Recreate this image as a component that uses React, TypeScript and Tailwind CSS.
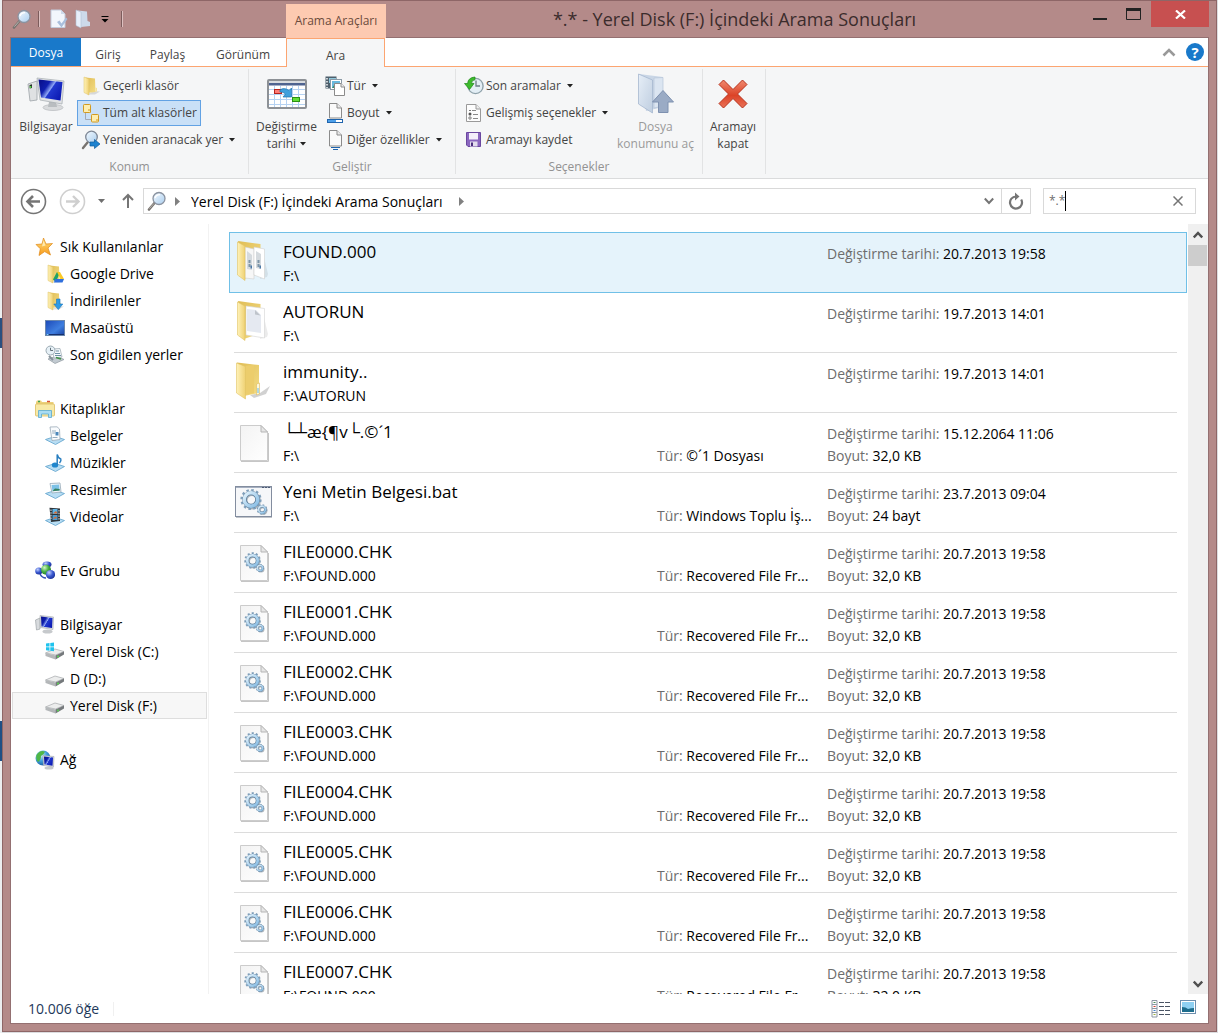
import { useState, type ReactNode } from "react";

type Icon = () => ReactNode;

const Gradients = () => (
  <svg width="0" height="0" className="absolute" aria-hidden="true">
    <defs>
      <linearGradient id="folderFront" x1="0" y1="0" x2="1" y2="0">
        <stop offset="0" stopColor="#fff2b8" />
        <stop offset="1" stopColor="#efd173" />
      </linearGradient>
      <linearGradient id="folderBack" x1="0" y1="0" x2="1" y2="1">
        <stop offset="0" stopColor="#e0bd55" />
        <stop offset="1" stopColor="#f3dc85" />
      </linearGradient>
      <linearGradient id="screen" x1="0" y1="0.2" x2="1" y2="0.8">
        <stop offset="0" stopColor="#0a128f" />
        <stop offset="0.3" stopColor="#0f1fae" />
        <stop offset="0.48" stopColor="#8ea6f6" />
        <stop offset="0.52" stopColor="#2138cf" />
        <stop offset="1" stopColor="#0a17b0" />
      </linearGradient>
      <linearGradient id="desk" x1="0" y1="0" x2="1" y2="1">
        <stop offset="0" stopColor="#1c49b8" />
        <stop offset="0.6" stopColor="#3f7fe0" />
        <stop offset="1" stopColor="#173f9e" />
      </linearGradient>
      <linearGradient id="gearFill" x1="0" y1="0" x2="1" y2="1">
        <stop offset="0" stopColor="#e2f2fc" />
        <stop offset="1" stopColor="#86bce4" />
      </linearGradient>
      <linearGradient id="glass" x1="0" y1="0" x2="1" y2="1">
        <stop offset="0" stopColor="#f4faff" />
        <stop offset="1" stopColor="#a9cdee" />
      </linearGradient>
      <linearGradient id="paper" x1="0" y1="0" x2="1" y2="1">
        <stop offset="0" stopColor="#f3f3f3" />
        <stop offset="1" stopColor="#ffffff" />
      </linearGradient>
      <linearGradient id="ghost" x1="0" y1="0" x2="1" y2="1">
        <stop offset="0" stopColor="#e6eef7" />
        <stop offset="1" stopColor="#bfcee0" />
      </linearGradient>
      <linearGradient id="redX" x1="0" y1="0" x2="0" y2="1">
        <stop offset="0" stopColor="#f08a70" />
        <stop offset="0.55" stopColor="#dc4327" />
        <stop offset="1" stopColor="#ea7359" />
      </linearGradient>
      <linearGradient id="star" x1="0" y1="0" x2="0" y2="1">
        <stop offset="0" stopColor="#ffdf7a" />
        <stop offset="1" stopColor="#f79a1c" />
      </linearGradient>
      <radialGradient id="blueBall" cx="0.35" cy="0.3" r="0.8">
        <stop offset="0" stopColor="#c3d2ff" />
        <stop offset="0.5" stopColor="#3a59d0" />
        <stop offset="1" stopColor="#152a8e" />
      </radialGradient>
      <radialGradient id="greenBall" cx="0.35" cy="0.3" r="0.8">
        <stop offset="0" stopColor="#d4f7c6" />
        <stop offset="0.5" stopColor="#47b043" />
        <stop offset="1" stopColor="#1c7423" />
      </radialGradient>
      <radialGradient id="globe" cx="0.35" cy="0.3" r="0.8">
        <stop offset="0" stopColor="#d9f2ff" />
        <stop offset="0.5" stopColor="#3f9fdc" />
        <stop offset="1" stopColor="#15539b" />
      </radialGradient>
    </defs>
  </svg>
);

/* ---------- 20px icons ---------- */

const Magnifier = () => (
  <svg width="20" height="20" viewBox="0 0 20 20">
    <path d="M2 18.500 L7.500 12" stroke="#77736f" strokeWidth="2.600" strokeLinecap="round" />
    <path d="M2.400 17.600 L7 12.400" stroke="#c9c5c2" strokeWidth="0.800" />
    <circle cx="12" cy="7.500" r="6" fill="url(#glass)" stroke="#8b93a0" strokeWidth="1.300" />
    <path d="M8 7 Q9 3.800 13 3.600" stroke="#fff" strokeWidth="1.400" fill="none" />
  </svg>
);

const FolderShape = () => (
  <>
    <path d="M13 15 L19 15.500 L14 18.500 L6 18.500z" fill="#000" opacity="0.12" />
    <path d="M4.500 1.500 L14 2.500 L14.500 16 L6 17z" fill="url(#folderBack)" />
    <path d="M3 1 L8 3 V19 L3 16.500z" fill="url(#folderFront)" stroke="#dfc063" strokeWidth="0.500" />
    <path d="M14.500 11.500 L16 12 V15.500 L14.500 16z" fill="#f5e29a" />
  </>
);

const SmallFolder = () => (
  <svg width="20" height="20" viewBox="0 0 20 20"><FolderShape /></svg>
);

const DriveFolder = () => (
  <svg width="20" height="20" viewBox="0 0 20 20">
    <FolderShape />
    <path d="M12 8 L15 8 L11 18 L8 15.500z" fill="#21a366" />
    <path d="M12 8 L15 8 L19 15 L15.500 15z" fill="#fbc926" />
    <path d="M10 15 L19 15 L17.500 18.500 L9 18.500z" fill="#2f6fdd" />
  </svg>
);

const DownloadFolder = () => (
  <svg width="20" height="20" viewBox="0 0 20 20">
    <FolderShape />
    <path d="M11.500 8 H15 V13 H17.800 L13.300 18.600 L8.800 13 H11.500z" fill="#2e9be6" stroke="#1673bd" strokeWidth="0.600" />
  </svg>
);

const TreeFolders = () => (
  <svg width="20" height="20" viewBox="0 0 20 20">
    <path d="M4.500 9 V16.500 H11" fill="none" stroke="#a3a9b3" />
    <rect x="2.500" y="1.500" width="7" height="8" rx="0.800" fill="#fdeeb0" stroke="#d29a20" />
    <path d="M7 7 h2.500 v2.500" fill="none" stroke="#d29a20" />
    <rect x="10.500" y="11.500" width="7" height="7.500" rx="0.800" fill="#fdeeb0" stroke="#d29a20" />
    <path d="M15 17 h2.500" stroke="#d29a20" />
  </svg>
);

const SearchAgain = () => (
  <svg width="20" height="20" viewBox="0 0 20 20">
    <path d="M2 18 L6.500 12.500" stroke="#77736f" strokeWidth="2.400" strokeLinecap="round" />
    <circle cx="10.500" cy="7" r="5.800" fill="url(#glass)" stroke="#7d8796" strokeWidth="1.300" />
    <path d="M9 12 H13.500 V9.500 L19 14 L13.500 18.500 V16 H9z" fill="#1d82cf" stroke="#0f5c9c" strokeWidth="0.700" />
  </svg>
);

const Kinds = () => (
  <svg width="20" height="20" viewBox="0 0 20 20">
    <rect x="0.500" y="0.500" width="11" height="12" fill="#4d5f6c" />
    <path d="M2 2v10" stroke="#fff" strokeWidth="1.400" strokeDasharray="1.500 1.500" />
    <rect x="4" y="2" width="7" height="5" fill="#8ec7dc" />
    <rect x="5.500" y="3.500" width="11" height="10" fill="#fff" stroke="#8a9aa6" />
    <rect x="7" y="5" width="8" height="7" fill="#69b9de" />
    <path d="M7 12 l3-4 2 2 3-2 v4z" fill="#3c8c6b" />
    <path d="M9.500 7.500 H16 L19.500 11 V19.500 H9.500z" fill="#fff" stroke="#8b8b8b" />
    <path d="M16 7.500 V11 H19.500" fill="#eee" stroke="#8b8b8b" />
  </svg>
);

const SizeDoc = () => (
  <svg width="20" height="20" viewBox="0 0 20 20">
    <path d="M4.500 0.500 H12 L16.500 5 V15 H4.500z" fill="#fafafa" stroke="#8b8b8b" />
    <path d="M12 0.500 V5 H16.500" fill="#e9e9e9" stroke="#8b8b8b" />
    <rect x="2.500" y="16.500" width="15" height="3" fill="#fff" stroke="#1f64ad" />
    <rect x="3" y="17" width="8" height="2" fill="#4da0ea" />
  </svg>
);

const MoreDoc = () => (
  <svg width="20" height="20" viewBox="0 0 20 20">
    <path d="M4.500 0.500 H12 L16.500 5 V16 H4.500z" fill="#fafafa" stroke="#8b8b8b" />
    <path d="M12 0.500 V5 H16.500" fill="#e9e9e9" stroke="#8b8b8b" />
    <path d="M6 17.500 H15 M8 19.500 H13" stroke="#1f64ad" />
  </svg>
);

const History = () => (
  <svg width="20" height="20" viewBox="0 0 20 20">
    <circle cx="11.500" cy="10" r="7.600" fill="#e3eef5" stroke="#8fa2ab" strokeWidth="1.400" />
    <path d="M12 4.500 V10 H16" fill="none" stroke="#6c7c86" strokeWidth="1.300" />
    <path d="M11 1 Q4 1.500 3.600 7.500 H0.500 L5.500 13.500 L10 7.500 H7.500 Q7.500 4 11 3.800z" fill="#3dbb2c" stroke="#1d8617" strokeWidth="0.700" />
  </svg>
);

const OptionsDoc = () => (
  <svg width="20" height="20" viewBox="0 0 20 20">
    <path d="M2.500 1.500 H12 L16.500 6 V18.500 H2.500z" fill="#fdfdfd" stroke="#9a9a9a" />
    <path d="M12 1.500 V6 H16.500" fill="#eee" stroke="#9a9a9a" />
    <path d="M8 7.500h4 M9 11.500h5 M9 15.500h5" stroke="#8a8a8a" />
    <circle cx="6" cy="11" r="1.500" fill="#555" />
    <circle cx="6" cy="15" r="1.200" fill="#fff" stroke="#777" />
    <path d="M5 7.500h2" stroke="#777" />
  </svg>
);

const Floppy = () => (
  <svg width="20" height="20" viewBox="0 0 20 20">
    <path d="M2.500 2.500 H16.500 V16.500 H4 L2.500 15z" fill="#8a66bf" stroke="#6a479f" />
    <rect x="5" y="3" width="9" height="6.500" fill="#f4effa" />
    <rect x="6" y="11.500" width="7.500" height="5" fill="#e2dced" />
    <rect x="7" y="12.500" width="2" height="3.500" fill="#4a2d7c" />
  </svg>
);

const Star = () => (
  <svg width="20" height="20" viewBox="0 0 20 20">
    <path d="M8.500 1 L11 7 L17.500 6.500 L13 11 L15.500 18 L9.700 14.600 L4 18.500 L5.300 11.800 L1 7.500 L7 7z" fill="url(#star)" stroke="#e08a1a" strokeWidth="0.700" />
    <path d="M8.500 3.500 L10.500 8.500 L7 9.500z" fill="#fff3c4" opacity="0.8" />
  </svg>
);

const Desktop = () => (
  <svg width="20" height="20" viewBox="0 0 20 20">
    <rect x="0.500" y="2.500" width="19" height="15" fill="url(#desk)" stroke="#6b87ad" />
    <path d="M1 16.500h18" stroke="#16306e" />
    <path d="M1.500 16.500h2" stroke="#7fd0ff" />
  </svg>
);

const Recent = () => (
  <svg width="20" height="20" viewBox="0 0 20 20">
    <path d="M3 14 L12 11 L19 14.500 L10 18.500z" fill="#c2cad1" stroke="#8e989f" strokeWidth="0.700" />
    <path d="M7 4 L15 3.500 L17 12 L9 13z" fill="#f5f9fc" stroke="#a5b0b8" strokeWidth="0.800" />
    <path d="M11 6h3 M10 8.500h5 M10 10.500h6" stroke="#6e90a5" />
    <circle cx="5.500" cy="5.500" r="4.500" fill="#e6f0f6" stroke="#9caab3" />
    <path d="M5.500 2.800 V5.500 H8" fill="none" stroke="#64727b" />
    <path d="M11 12.500 L16 14" stroke="#3d9145" strokeWidth="1.500" />
    <path d="M4 11 L8 15" stroke="#849099" strokeWidth="2" />
  </svg>
);

const Libraries = () => (
  <svg width="20" height="20" viewBox="0 0 20 20">
    <path d="M1 3 L2 1.500 H6 L7 3 H18.500 V17 H1z" fill="#ecd07a" />
    <path d="M3 2.500h2" stroke="#3aa352" strokeWidth="1.500" />
    <path d="M12 2.500h3" stroke="#d95338" strokeWidth="1.500" />
    <rect x="0.500" y="5" width="19" height="12" rx="1" fill="#f8e9a6" stroke="#dcbc60" strokeWidth="0.800" />
    <path d="M3.500 18.500 V11.500 H16.500 V18.500 H13.500 V15 H6.500 V18.500z" fill="#a9dcf2" stroke="#58a9d0" strokeWidth="0.800" />
  </svg>
);

const Tray = () => (
  <path d="M0.500 13.500 L10 10.500 L19.500 13.500 L10.500 18.500z" fill="#b8ddf3" stroke="#6aa9d0" strokeWidth="0.900" />
);

const Documents = () => (
  <svg width="20" height="20" viewBox="0 0 20 20">
    <Tray />
    <path d="M5 1 L12 0.800 L14.500 3 L15 13.500 L7 14.500z" fill="#fafcfe" stroke="#9aaab8" strokeWidth="0.800" />
    <path d="M7 5h4 M7.200 7h3 M7.500 11.500h5" stroke="#8ba4b8" strokeWidth="0.900" />
    <rect x="10.500" y="6" width="3" height="3.500" fill="#4a86ba" />
  </svg>
);

const Music = () => (
  <svg width="20" height="20" viewBox="0 0 20 20">
    <Tray />
    <ellipse cx="10" cy="12" rx="3.200" ry="2.600" fill="#1f86cd" />
    <path d="M12.200 12 V1.500 Q13 5 15.800 6 Q16.500 8 14.500 10" fill="none" stroke="#2a7fc0" strokeWidth="1.500" />
  </svg>
);

const Pictures = () => (
  <svg width="20" height="20" viewBox="0 0 20 20">
    <Tray />
    <path d="M5 3.500 L15 3 L16 12 L7 13z" fill="#f4f8fb" stroke="#97a9b8" strokeWidth="0.800" />
    <path d="M6.500 5 L14 4.600 L14.700 10.600 L7.500 11.200z" fill="#7cc1e6" />
    <path d="M7.300 11.200 L10 8.500 L14.600 9 V10.600z" fill="#35815f" />
  </svg>
);

const Videos = () => (
  <svg width="20" height="20" viewBox="0 0 20 20">
    <Tray />
    <path d="M4.500 0.800 L15 1.500 V14 L6 15z" fill="#2c343a" />
    <path d="M6 2.500 V13.500 M14 3 V13" stroke="#e2e6e8" strokeDasharray="1.500 1.200" />
    <path d="M7.500 2 H12.500 V7 H7.500z" fill="#5db3e4" />
    <path d="M7.500 8 H12.500 V13 H7.500z" fill="#4a9bd0" />
    <path d="M8 6.500 L11 4 L12.500 6.500z M8 12 L10 9.500 L12.500 11z" fill="#de6a30" />
  </svg>
);

const HomeGroup = () => (
  <svg width="20" height="20" viewBox="0 0 20 20">
    <circle cx="3.800" cy="10" r="3.600" fill="url(#blueBall)" />
    <ellipse cx="12" cy="3.500" rx="4.500" ry="3" fill="url(#blueBall)" />
    <circle cx="11" cy="8.700" r="5" fill="url(#greenBall)" />
    <circle cx="15.500" cy="13.500" r="4.600" fill="url(#blueBall)" />
    <path d="M5 13 Q7 17 11 17" stroke="#2f4fb5" strokeWidth="1.500" fill="none" />
  </svg>
);

const SmallComputer = () => (
  <svg width="20" height="20" viewBox="0 0 20 20">
    <path d="M0.500 5 L5 3 V14 L1.500 15z" fill="#d8dbde" stroke="#9da3a8" strokeWidth="0.700" />
    <ellipse cx="12.500" cy="16.500" rx="5" ry="2" fill="#c6c9cc" />
    <path d="M5 0.500 L18.500 2 L18 14.500 L5.500 12.500z" fill="#d9dcdf" stroke="#a4aaaf" strokeWidth="0.600" />
    <path d="M6 1.500 L17.500 3 L17 13 L6.500 11.500z" fill="url(#screen)" />
  </svg>
);

const DriveShape = () => (
  <>
    <path d="M0.500 11 L10 7 L19 9.500 L10.500 13z" fill="#eceded" stroke="#a5a8aa" strokeWidth="0.700" />
    <path d="M0.500 11 L10.500 13.500 V17.500 L0.500 14z" fill="#b4b7b9" />
    <path d="M10.500 13.500 L19 9.500 V12.500 L10.500 17.500z" fill="#75797c" />
    <circle cx="13" cy="14.500" r="0.900" fill="#53e04a" />
  </>
);

const WindowsDrive = () => (
  <svg width="20" height="20" viewBox="0 0 20 20">
    <DriveShape />
    <path d="M1 1.500 L4.500 1 V4.500 H1z M5.300 0.900 L9 0.500 V4.500 H5.300z M1 5.300 H4.500 V8.700 L1 8.300z M5.300 5.300 H9 V9.200 L5.300 8.800z" fill="#20c3ee" />
  </svg>
);

const Drive = () => (
  <svg width="20" height="20" viewBox="0 0 20 20"><DriveShape /></svg>
);

const Network = () => (
  <svg width="20" height="20" viewBox="0 0 20 20">
    <circle cx="8" cy="8" r="7.500" fill="url(#globe)" />
    <path d="M1.500 5 Q5 -0.500 10 1.500 Q9 5 6 6 Q6 10 3 12 Q0.500 9 1.500 5z M9 10 Q12 9 13 12 L10 14z" fill="#4fb747" />
    <ellipse cx="14" cy="18" rx="4.500" ry="1.500" fill="#c6c9cc" />
    <path d="M8 5.500 L19 6.500 L18.500 17 L8.500 15.500z" fill="#d9dcdf" stroke="#a4aaaf" strokeWidth="0.600" />
    <path d="M9 6.600 L18 7.600 L17.500 15.800 L9.500 14.600z" fill="url(#screen)" />
  </svg>
);

const PropertiesIcon = () => (
  <svg width="20" height="20" viewBox="0 0 20 20">
    <path d="M2 1 H12 L16 5 V18.500 H2z" fill="#f2f6fc" stroke="#c2cbdb" />
    <path d="M12 1 V5 H16" fill="#cfdaea" />
    <path d="M8 13 L10.500 11.500 L12.500 14.500 L17 8.500 L18.500 10 L12.500 18.500z" fill="#a9bedb" />
  </svg>
);

const NewFolderIcon = () => (
  <svg width="20" height="20" viewBox="0 0 20 20">
    <path d="M5 1.500 L14 2.500 L14.500 12 L17 13 V17 L8 18z" fill="#cddaea" />
    <path d="M3 1 L8 3 V19 L3 16.500z" fill="#e7effa" stroke="#b0bfd4" strokeWidth="0.600" />
  </svg>
);

/* ---------- large icons ---------- */

const Computer = () => (
  <svg width="38" height="36" viewBox="0 0 38 36">
    <path d="M1 8 L10 5 V24 L3 25z" fill="#dfe1e3" stroke="#9da3a8" strokeWidth="0.800" />
    <path d="M2.500 9 L5 8.300 V12 L2.700 12.600z" fill="#26302b" />
    <circle cx="3.500" cy="11" r="1" fill="#5ae04a" />
    <ellipse cx="26" cy="31.500" rx="10" ry="3" fill="#d9dbdd" stroke="#b4b8bb" strokeWidth="0.700" />
    <path d="M22 26 h7 l1 5 h-9z" fill="#b9bdc0" />
    <path d="M10 2 L37 5 L35 28 L13 24z" fill="#e1e3e5" stroke="#a4aaaf" strokeWidth="0.700" />
    <path d="M11.500 3.500 L35.500 6 L33.500 24.500 L14 21.500z" fill="url(#screen)" />
  </svg>
);

const Calendar = () => (
  <svg width="40" height="30" viewBox="0 0 40 30">
    <rect x="1" y="1" width="38" height="28" rx="1" fill="#fff" stroke="#8d9196" strokeWidth="2" />
    <rect x="2" y="2" width="36" height="2.500" fill="#d9dcdf" />
    <rect x="2" y="4" width="36" height="2.500" fill="#4e6390" />
    <path d="M2 10.500 H38 M2 15.500 H38 M2 20.500 H38 M2 25.500 H38 M7.500 7 V28 M13.500 7 V28 M19.500 7 V28 M25.500 7 V28 M31.500 7 V28" stroke="#b5d2f2" />
    <rect x="7.500" y="10.500" width="7" height="4" fill="#ff7d76" stroke="#b8241c" />
    <path d="M13 11 Q17 8 22 11.500 L24.500 9 V18 H16 L18.500 15 Q16 12.500 13 13z" fill="#3e9fdc" stroke="#1f72ad" strokeWidth="0.700" />
    <rect x="25.500" y="18.500" width="7" height="4" fill="#62df35" stroke="#2c9113" />
  </svg>
);

const OpenLocation = () => (
  <svg width="38" height="42" viewBox="0 0 38 42">
    <path d="M2 1 L26 4 V34 L9 38z" fill="#c9d6e6" />
    <path d="M17 5 L26 4.500 V33 L17 35z" fill="#dbe5f1" stroke="#b7c6d9" strokeWidth="0.700" />
    <path d="M1.500 1 L15.500 7 V40 L1.500 31z" fill="url(#ghost)" stroke="#a6b8cf" strokeWidth="0.800" />
    <path d="M26 17.500 L36.500 29 H31 V39.500 H21.500 V29 H15.500z" fill="#9aabc5" stroke="#7e91b0" />
  </svg>
);

const CloseSearch = () => (
  <svg width="30" height="30" viewBox="0 0 30 30">
    <path d="M5.500 1 L15 10.500 L24.500 1 L29 5.500 L19.500 15 L29 24.500 L24.500 29 L15 19.500 L5.500 29 L1 24.500 L10.500 15 L1 5.500z" fill="url(#redX)" stroke="#b8321c" strokeLinejoin="round" />
  </svg>
);

/* ---------- file icons ---------- */

const Gear = ({ cx, cy, r, teeth }: { cx: number; cy: number; r: number; teeth: number }) => {
  const tooth = (Math.PI * r) / teeth;
  return (
    <g fill="none">
      <circle cx={cx + 1} cy={cy + 1} r={r * 0.75} stroke="#6f7f8d" strokeWidth={r * 0.5} opacity="0.55" />
      <circle cx={cx} cy={cy} r={r} stroke="#7f9fbb" strokeWidth={r * 0.36} strokeDasharray={tooth} />
      <circle cx={cx} cy={cy} r={r * 0.72} stroke="#5f7f9b" strokeWidth={r * 0.5} />
      <circle cx={cx} cy={cy} r={r * 0.75} stroke="url(#gearFill)" strokeWidth={r * 0.38} />
    </g>
  );
};

const Page = () => (
  <>
    <path d="M7 44.500 H34.500 V16" fill="none" stroke="#c6c6c6" />
    <path d="M6.500 8.500 H27 L33.500 15 V43.500 H6.500z" fill="url(#paper)" stroke="#cccccc" />
    <path d="M27 8.500 V15 H33.500z" fill="#e6e6e6" stroke="#b5b5b5" />
  </>
);

const BlankFile = () => (
  <svg width="40" height="48" viewBox="0 0 40 48"><Page /></svg>
);

const ChkFile = () => (
  <svg width="40" height="48" viewBox="0 0 40 48">
    <Page />
    <Gear cx={18.5} cy={23.5} r={7} teeth={11} />
    <Gear cx={26} cy={31} r={3.5} teeth={8} />
  </svg>
);

const BatFile = () => (
  <svg width="40" height="48" viewBox="0 0 40 48">
    <rect x="1.500" y="9.500" width="36" height="30" fill="#f6f7f9" stroke="#838d9f" />
    <path d="M2 10.500h35" stroke="#a5afc0" />
    <path d="M2 40.500h36" stroke="#c0c4ca" />
    <path d="M28 10.500h8" stroke="#4c5a73" strokeDasharray="2 1" />
    <Gear cx={17} cy={22.5} r={9} teeth={12} />
    <Gear cx={28} cy={32.500} r={4.500} teeth={8} />
  </svg>
);

const OpenFolder = ({ children }: { children?: ReactNode }) => (
  <svg width="40" height="48" viewBox="0 0 40 48">
    <path d="M26 42 L33 40 L34 37 L28 12z" fill="#000" opacity="0.08" />
    <path d="M4 4 L26.500 7 V36 L10 42z" fill="url(#folderBack)" />
    {children}
    <path d="M3.500 5 L11 9 V43.500 L3.500 38z" fill="url(#folderFront)" stroke="#e0c263" strokeWidth="0.600" />
  </svg>
);

const FoundFolder = () => (
  <OpenFolder>
    <path d="M11 10 L20 12 V42 L11 41z" fill="#f7f7f7" stroke="#d0d0d0" strokeWidth="0.600" />
    <path d="M20 10 L30.500 12 V42 L20 38z" fill="#fff" stroke="#d0d0d0" strokeWidth="0.600" />
    <path d="M13 14 L18 18 V33 L13 32z M22 14 L27 17 V32 L22 31z" fill="#d5dade" />
    <path d="M15.500 23 V31 M24.500 23 V31" stroke="#7e95a8" strokeWidth="2" strokeDasharray="3 1" fill="none" />
    <path d="M16.500 30h1.500 M25.500 30h1.500" stroke="#4a77a5" strokeWidth="3" />
  </OpenFolder>
);

const DocFolder = () => (
  <OpenFolder>
    <path d="M12 9 L30.500 11.500 V41 L12 38z" fill="#fff" stroke="#d3d3d3" strokeWidth="0.600" />
    <path d="M13 12 L22 13 L27 18 V36 L13 34z" fill="#e5e9f1" />
    <path d="M21 13 V17.500 L26.500 18.500z" fill="#bfc4cb" />
  </OpenFolder>
);

const ClosedFolder = () => (
  <svg width="40" height="48" viewBox="0 0 40 48">
    <path d="M16 38 L26 36 L36 29 L32 37 L20 41z" fill="#000" opacity="0.18" />
    <path d="M3 5.500 L25 8 V36 L10 39z" fill="url(#folderBack)" />
    <path d="M11 9 L20 8 V36 L11 38z" fill="#eccd6c" />
    <path d="M2.500 6 L11.500 9.500 V42 L2.500 36z" fill="url(#folderFront)" stroke="#e0c263" strokeWidth="0.600" />
    <path d="M22.500 27 L25.500 26 V37 L22.500 38z" fill="#fff8dc" stroke="#dcbc5c" strokeWidth="0.600" />
    <path d="M24 31v5" stroke="#61b8e8" />
  </svg>
);

/* ---------- data ---------- */

const navGroups: { label: string; icon: Icon; children: { label: string; icon: Icon; current?: boolean }[] }[] = [
  {
    label: "Sık Kullanılanlar",
    icon: Star,
    children: [
      { label: "Google Drive", icon: DriveFolder },
      { label: "İndirilenler", icon: DownloadFolder },
      { label: "Masaüstü", icon: Desktop },
      { label: "Son gidilen yerler", icon: Recent },
    ],
  },
  {
    label: "Kitaplıklar",
    icon: Libraries,
    children: [
      { label: "Belgeler", icon: Documents },
      { label: "Müzikler", icon: Music },
      { label: "Resimler", icon: Pictures },
      { label: "Videolar", icon: Videos },
    ],
  },
  { label: "Ev Grubu", icon: HomeGroup, children: [] },
  {
    label: "Bilgisayar",
    icon: SmallComputer,
    children: [
      { label: "Yerel Disk (C:)", icon: WindowsDrive },
      { label: "D (D:)", icon: Drive },
      { label: "Yerel Disk (F:)", icon: Drive, current: true },
    ],
  },
  { label: "Ağ", icon: Network, children: [] },
];

interface Result {
  name: string;
  path: string;
  date: string;
  type?: string;
  size?: string;
  icon: Icon;
}

const results: Result[] = [
  { name: "FOUND.000", path: "F:\\", date: "20.7.2013 19:58", icon: FoundFolder },
  { name: "AUTORUN", path: "F:\\", date: "19.7.2013 14:01", icon: DocFolder },
  { name: "immunity..", path: "F:\\AUTORUN", date: "19.7.2013 14:01", icon: ClosedFolder },
  { name: "└┴æ{¶v└.©´1", path: "F:\\", date: "15.12.2064 11:06", type: "©´1 Dosyası", size: "32,0 KB", icon: BlankFile },
  { name: "Yeni Metin Belgesi.bat", path: "F:\\", date: "23.7.2013 09:04", type: "Windows Toplu İş...", size: "24 bayt", icon: BatFile },
  ...Array.from({ length: 8 }, (_, i) => ({
    name: `FILE000${i}.CHK`,
    path: "F:\\FOUND.000",
    date: "20.7.2013 19:58",
    type: "Recovered File Fr...",
    size: "32,0 KB",
    icon: ChkFile,
  })),
];

/* ---------- pieces ---------- */

const Caret = () => (
  <svg width="6" height="4" viewBox="0 0 6 4" className="shrink-0"><path d="M0 0h6L3 3.500z" fill="#222" /></svg>
);

function SmallButton({ icon: I, label, menu, active }: { icon: Icon; label: string; menu?: boolean; active?: boolean }) {
  return (
    <button
      className={`flex h-[26px] items-center gap-[2px] self-start border px-[3px] whitespace-nowrap ${
        active ? "border-[#62a2e4] bg-[#c9e0f7]" : "border-transparent"
      }`}
    >
      <I />
      <span>{label}</span>
      {menu && <span className="ml-1"><Caret /></span>}
    </button>
  );
}

function BigButton({ icon: I, lines, menu, disabled, width }: { icon: Icon; lines: string[]; menu?: boolean; disabled?: boolean; width: string }) {
  return (
    <button disabled={disabled} className={`flex flex-col items-center leading-[17px] ${width} ${disabled ? "text-[#9a9a9a]" : ""}`}>
      <span className="flex h-[48px] items-center justify-center"><I /></span>
      {lines.map((line, i) => (
        <span key={line} className="flex items-center gap-1 whitespace-nowrap">
          {line}
          {menu && i === lines.length - 1 && <Caret />}
        </span>
      ))}
    </button>
  );
}

function RibbonGroup({ label, width, children }: { label?: string; width: string; children: ReactNode }) {
  return (
    <section className={`flex shrink-0 flex-col border-r border-[#e2e3e4] ${width}`}>
      <div className="flex h-[88px] shrink-0 items-start">{children}</div>
      <div className="text-center leading-[20px] text-[#929292]">{label}</div>
    </section>
  );
}

function ResultRow({ item, selected, onSelect }: { item: Result; selected: boolean; onSelect: () => void }) {
  const I = item.icon;
  return (
    <li
      onClick={onSelect}
      className={`flex shrink-0 ${
        selected ? "-mt-px mr-px ml-5 h-[61px] border border-[#70c0e7] bg-[#e5f3fb] pr-[9px] pl-1" : "mr-[11px] ml-[25px] h-[60px] border-b border-[#dcdcdc]"
      }`}
    >
      <div className="w-[49px] shrink-0 pt-1"><I /></div>
      <div className="min-w-0 flex-1 pt-[7px] leading-[24px]">
        <div className="truncate text-[17px]">{item.name}</div>
        <div className="truncate text-[14px]">{item.path}</div>
      </div>
      <div className="w-[170px] shrink-0 pt-8 text-[14px] leading-[22px] whitespace-nowrap">
        {item.type && <><span className="text-[#6d6d6d]">Tür:</span> {item.type}</>}
      </div>
      <div className="w-[350px] shrink-0 pt-[10px] text-[14px] leading-[22px] whitespace-nowrap">
        <div><span className="text-[#6d6d6d]">Değiştirme tarihi:</span> {item.date}</div>
        {item.size && <div><span className="text-[#6d6d6d]">Boyut:</span> {item.size}</div>}
      </div>
    </li>
  );
}

export default function App() {
  const [selected, setSelected] = useState(0);
  const [query, setQuery] = useState("*.*");

  return (
    <div className="flex h-screen overflow-hidden bg-[#dcdde0] font-['Open_Sans','Noto_Sans',sans-serif] text-[14px] text-black">
      <Gradients />
      <div className="flex w-[2px] shrink-0 flex-col bg-[#eceef0]">
        <div className="mt-[318px] h-[30px] bg-[#2a4f80]" />
        <div className="mt-[373px] h-[40px] bg-[#1f4f85]" />
      </div>

      <div className="mb-px flex min-w-0 flex-1 flex-col border border-[#8e6667] bg-[#b48a89]">
        {/* title bar */}
        <header className="flex h-9 shrink-0">
          <div className="flex w-[283px] shrink-0 items-center pl-[9px]">
            <Magnifier />
            <span className="mr-[9px] ml-[6px] h-4 w-[2px] border-l border-[#7c5c5c] bg-[#dcc0c0]" />
            <button aria-label="Özellikler"><PropertiesIcon /></button>
            <button aria-label="Yeni klasör" className="ml-1"><NewFolderIcon /></button>
            <button aria-label="Özelleştir" className="ml-2">
              <svg width="8" height="8" viewBox="0 0 8 8"><path d="M0.500 1.500h7" stroke="#000" /><path d="M0.500 4h7L4 7.500z" /></svg>
            </button>
            <span className="ml-3 h-4 w-[2px] border-l border-[#7c5c5c] bg-[#dcc0c0]" />
          </div>
          <div className="relative mt-[3px] -mb-px flex w-[100px] shrink-0 items-center justify-center bg-[#fdcab1] text-[12px] whitespace-nowrap text-[#6b4b3c]">
            Arama Araçları
          </div>
          <h1 className="min-w-0 flex-1 truncate text-center text-[18px] leading-[36px] text-[#3b2c2c]">
            *.* - Yerel Disk (F:) İçindeki Arama Sonuçları
          </h1>
          <div className="mr-[7px] flex shrink-0 items-start">
            <button aria-label="Simge durumuna küçült" className="flex h-[26px] w-[33px] items-center justify-center">
              <svg width="14" height="14" viewBox="0 0 14 14"><path d="M0 12h14" stroke="#222" strokeWidth="2" /></svg>
            </button>
            <button aria-label="Ekranı kapla" className="flex h-[26px] w-[34px] items-center justify-center">
              <svg width="15" height="12" viewBox="0 0 15 12"><path d="M0 1.500h15" stroke="#222" strokeWidth="3" /><path d="M0.500 2v9.500h14V2" fill="none" stroke="#222" /></svg>
            </button>
            <button aria-label="Kapat" className="ml-[1px] flex h-[26px] w-[58px] items-center justify-center bg-[#c75050]">
              <svg width="11" height="9" viewBox="0 0 11 9"><path d="M1 0.500l9 8M10 0.500l-9 8" stroke="#fff" strokeWidth="2.200" /></svg>
            </button>
          </div>
        </header>

        <div className="mx-[7px] mb-[7px] flex min-h-0 flex-1 flex-col border border-[#947071] bg-white">
          {/* tabs */}
          <nav className="flex h-[29px] shrink-0 text-[12px] text-[#444]">
            <button className="w-[70px] border-b border-[#fca571] bg-[#1979ca] pt-[2px] text-white">Dosya</button>
            <button className="w-[54px] border-b border-[#fca571] pt-[5px]">Giriş</button>
            <button className="w-[65px] border-b border-[#fca571] pt-[5px]">Paylaş</button>
            <button className="w-[86px] border-b border-[#fca571] pt-[5px]">Görünüm</button>
            <button className="w-[99px] border-x border-t border-[#fca571] bg-[#f5f6f7] pt-[5px]">Ara</button>
            <div className="flex flex-1 items-center justify-end gap-[10px] border-b border-[#fca571] pr-1">
              <button aria-label="Şeridi simge durumuna küçült">
                <svg width="14" height="10" viewBox="0 0 14 10"><path d="M1.500 8.500L7 3l5.500 5.500" fill="none" stroke="#999" strokeWidth="2.600" /></svg>
              </button>
              <button aria-label="Yardım" className="h-[18px] w-[18px] rounded-full bg-[#1979ca] text-center text-[15px] leading-[18px] font-bold text-white">?</button>
            </div>
          </nav>

          {/* ribbon */}
          <div className="flex h-[112px] shrink-0 overflow-hidden border-b border-[#dadbdc] bg-[#f5f6f7] pt-[2px] pb-1 text-[12px] text-[#444]">
            <RibbonGroup label="Konum" width="w-[238px]">
              <div className="mt-[1px] shrink-0"><BigButton icon={Computer} lines={["Bilgisayar"]} width="w-[66px] pl-1" /></div>
              <div className="mt-1 flex flex-col gap-px">
                <SmallButton icon={SmallFolder} label="Geçerli klasör" />
                <SmallButton icon={TreeFolders} label="Tüm alt klasörler" active />
                <SmallButton icon={SearchAgain} label="Yeniden aranacak yer" menu />
              </div>
            </RibbonGroup>
            <RibbonGroup label="Geliştir" width="w-[207px]">
              <div className="mt-[1px] shrink-0"><BigButton icon={Calendar} lines={["Değiştirme", "tarihi"]} menu width="w-[72px] pl-[3px]" /></div>
              <div className="mt-1 flex flex-col gap-px">
                <SmallButton icon={Kinds} label="Tür" menu />
                <SmallButton icon={SizeDoc} label="Boyut" menu />
                <SmallButton icon={MoreDoc} label="Diğer özellikler" menu />
              </div>
            </RibbonGroup>
            <RibbonGroup label="Seçenekler" width="w-[247px]">
              <div className="mt-1 ml-1 flex w-[152px] shrink-0 flex-col gap-px">
                <SmallButton icon={History} label="Son aramalar" menu />
                <SmallButton icon={OptionsDoc} label="Gelişmiş seçenekler" menu />
                <SmallButton icon={Floppy} label="Aramayı kaydet" />
              </div>
              <div className="mt-[1px] shrink-0"><BigButton icon={OpenLocation} lines={["Dosya", "konumunu aç"]} disabled width="w-[87px]" /></div>
            </RibbonGroup>
            <RibbonGroup width="w-[63px]">
              <div className="mt-[1px] shrink-0"><BigButton icon={CloseSearch} lines={["Aramayı", "kapat"]} width="w-[60px]" /></div>
            </RibbonGroup>
          </div>

          {/* address bar */}
          <div className="flex h-[45px] shrink-0 items-center pr-3 pb-px pl-[9px]">
            <button aria-label="Geri">
              <svg width="27" height="27" viewBox="0 0 27 27" fill="none" stroke="#757575" strokeWidth="1.600">
                <circle cx="13.500" cy="13.500" r="12" /><path d="M20 13.500H8M13 8l-5.500 5.500L13 19" strokeWidth="2.600" />
              </svg>
            </button>
            <button aria-label="İleri" className="ml-3">
              <svg width="27" height="27" viewBox="0 0 27 27" fill="none" stroke="#cfcfcf" strokeWidth="1.600">
                <circle cx="13.500" cy="13.500" r="12" /><path d="M7 13.500H19M14 8l5.500 5.500L14 19" strokeWidth="2.400" />
              </svg>
            </button>
            <button aria-label="Son konumlar" className="ml-3">
              <svg width="7" height="4" viewBox="0 0 7 4"><path d="M0 0h7L3.500 4z" fill="#6f6f6f" /></svg>
            </button>
            <button aria-label="Yukarı" className="ml-4">
              <svg width="14" height="16" viewBox="0 0 14 16"><path d="M7 15V2M2 7l5-5 5 5" fill="none" stroke="#757575" strokeWidth="2" /></svg>
            </button>
            <div className="ml-2 flex h-[26px] min-w-0 flex-1 items-center border border-[#d9d9d9] pl-[3px]">
              <Magnifier />
              <svg width="5" height="9" viewBox="0 0 5 9" className="mr-[11px] ml-2 shrink-0"><path d="M0 0v9l5-4.500z" fill="#808080" /></svg>
              <a href="#" className="truncate text-[14px]">Yerel Disk (F:) İçindeki Arama Sonuçları</a>
              <svg width="5" height="9" viewBox="0 0 5 9" className="mx-4 shrink-0"><path d="M0 0v9l5-4.500z" fill="#808080" /></svg>
              <button aria-label="Önceki konumlar" className="ml-auto flex h-full w-6 items-center justify-center">
                <svg width="10" height="8" viewBox="0 0 10 8"><path d="M0.800 1.500L5 6l4.200-4.500" fill="none" stroke="#757575" strokeWidth="2" /></svg>
              </button>
              <button aria-label="Yenile" className="flex h-full w-[29px] items-center justify-center border-l border-[#d9d9d9]">
                <svg width="16" height="18" viewBox="0 0 16 18"><path d="M13.200 7.500A6 6 0 1 1 8 4.500" fill="none" stroke="#757575" strokeWidth="2.200" /><path d="M7 0.500v8l4.500-4z" fill="#757575" /></svg>
              </button>
            </div>
            <label className="ml-3 flex h-[26px] w-[153px] shrink-0 items-center border border-[#d9d9d9] pl-[5px]">
              <input
                aria-label="Ara"
                value={query}
                onChange={(e) => setQuery(e.target.value)}
                className="field-sizing-content max-w-[110px] text-[12px] text-[#6d6d6d] outline-none"
              />
              <span className="h-5 w-px bg-black" />
              <button aria-label="Aramayı temizle" onClick={() => setQuery("")} className="mr-3 ml-auto">
                <svg width="10" height="10" viewBox="0 0 10 10"><path d="M0.500 0.500l9 9M9.500 0.500l-9 9" stroke="#757575" strokeWidth="1.500" /></svg>
              </button>
            </label>
          </div>

          <div className="flex min-h-0 flex-1">
            <aside className="w-[198px] shrink-0 overflow-hidden border-r border-[#f2f2f2] pt-[9px]">
              {navGroups.map(({ label, icon: I, children }) => (
                <div key={label} className="mb-[27px]">
                  <a href="#" className="flex h-[27px] items-center gap-[5px] pl-6"><I />{label}</a>
                  {children.map(({ label: text, icon: C, current }) => (
                    <a
                      key={text}
                      href="#"
                      className={`mr-px ml-px flex h-[27px] items-center gap-[5px] border pl-8 ${current ? "border-[#dedede] bg-[#f7f7f7]" : "border-transparent"}`}
                    >
                      <C />
                      {text}
                    </a>
                  ))}
                </div>
              ))}
            </aside>
            <ul className="flex min-w-0 flex-1 flex-col overflow-hidden pt-[9px]">
              {results.map((item, i) => (
                <ResultRow key={item.name} item={item} selected={selected === i} onSelect={() => setSelected(i)} />
              ))}
            </ul>
            <div className="flex w-[20px] shrink-0 flex-col items-center bg-[#f0f0f0] pr-px">
              <button aria-label="Yukarı kaydır" className="flex h-[21px] items-center">
                <svg width="10" height="8" viewBox="0 0 10 8"><path d="M0.800 6.500L5 2l4.200 4.500" fill="none" stroke="#505050" strokeWidth="2.400" /></svg>
              </button>
              <div className="h-[21px] w-[19px] bg-[#cdcdcd]" />
              <button aria-label="Aşağı kaydır" className="mt-auto flex h-[21px] items-center">
                <svg width="10" height="8" viewBox="0 0 10 8"><path d="M0.800 1.500L5 6l4.200-4.500" fill="none" stroke="#505050" strokeWidth="2.400" /></svg>
              </button>
            </div>
          </div>

          {/* status bar */}
          <footer className="flex h-[29px] shrink-0 items-center pr-3 pl-[17px] text-[14px] text-[#1e395b]">
            <span className="w-[86px] border-r border-[#f0f0f0] leading-[14px]">10.006 öğe</span>
            <button aria-label="Ayrıntılar" className="ml-auto">
              <svg width="20" height="18" viewBox="0 0 20 18">
                <path d="M1 0.500h5v16.500h-5z M1 4.500h5 M1 8.500h5 M1 12.500h5" fill="#fff" stroke="#8d97a5" />
                <path d="M2.500 2.500h2" stroke="#4a8f58" /><path d="M2.500 6.500h2" stroke="#d23b2c" /><path d="M2.500 10.500h2" stroke="#3b82d2" /><path d="M2.500 14.500h2" stroke="#9cb53c" />
                <path d="M8 2.500h5 M14 2.500h5 M8 6.500h5 M14 6.500h5 M8 10.500h5 M14 10.500h5 M8 14.500h5 M14 14.500h5" stroke="#4a5464" />
              </svg>
            </button>
            <button aria-label="Büyük simgeler" className="mb-[3px] ml-[9px]">
              <svg width="16" height="14" viewBox="0 0 16 14">
                <rect x="0.500" y="0.500" width="15" height="13" fill="#fff" stroke="#6e8fae" />
                <rect x="2" y="2" width="12" height="10" fill="#8fd0f2" />
                <path d="M2 12V7q4 0 6 2 3-1 6-1v4z" fill="#1e6d8d" />
              </svg>
            </button>
          </footer>
        </div>
      </div>

      <div className="w-px shrink-0" />
    </div>
  );
}
